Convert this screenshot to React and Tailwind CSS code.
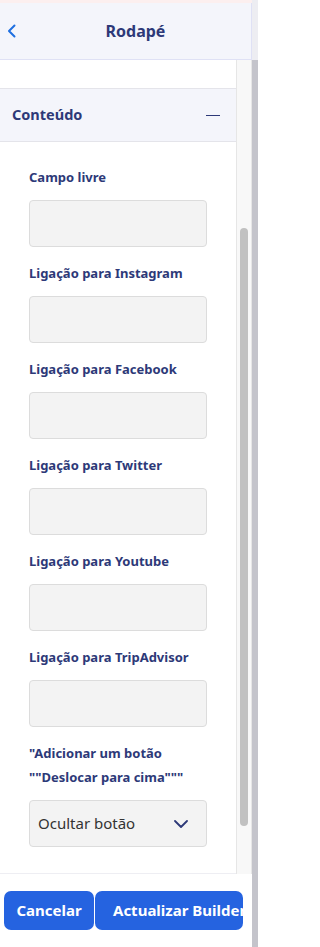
import React from "react";

const fields = [
  "Campo livre",
  "Ligação para Instagram",
  "Ligação para Facebook",
  "Ligação para Twitter",
  "Ligação para Youtube",
  "Ligação para TripAdvisor",
];

const App = () => {
  return (
    <div
      className="flex w-[258px] h-[947px] overflow-hidden bg-white"
      style={{ fontFamily: '"Noto Sans", "Open Sans", sans-serif' }}
    >
      <div className="flex flex-col w-[252px] h-full">
        <div className="h-[3px] bg-[#fcefef]" />
        {/* header */}
        <div className="flex items-center h-[57px] bg-[#f4f5fb] border-b border-r border-[#dfe1f5]">
          <button className="w-[22px] pl-[7px] flex items-center text-[#1e6fe0]">
            <svg width="9" height="14" viewBox="0 0 9 14" fill="none">
              <path d="M7.5 1.5L2 7l5.5 5.5" stroke="currentColor" strokeWidth="2" strokeLinecap="round" strokeLinejoin="round" />
            </svg>
          </button>
          <h1 className="flex-1 text-center text-[16px] font-bold text-[#2d3978] pr-[2px]">Rodapé</h1>
        </div>

        <div className="flex flex-1 min-h-0">
          {/* panel */}
          <div className="w-[236px] flex flex-col">
            <div className="h-[28px]" />
            <div className="flex items-center justify-between h-[54px] bg-[#f4f5fb] border-t border-b border-[#e4e4ea] pl-[12px] pr-[16px]">
              <span className="text-[14.5px] font-bold text-[#2d3978]">Conteúdo</span>
              <span className="block w-[14px] h-px bg-[#2d3978]" />
            </div>
            <div className="flex-1 pl-[29px] pr-[29px] pt-[23px] border-b border-[#eeeef3]">
              {fields.map((f, i) => (
                <div key={f} className={i === 0 ? "" : "mt-[14px]"}>
                  <div className="h-[24px] leading-[24px] text-[13px] font-bold text-[#2d3978] mb-[11px] whitespace-nowrap">{f}</div>
                  <div className="h-[47px] rounded-[4px] bg-[#f3f3f3] border border-[#dcdcdc]" />
                </div>
              ))}
              <div className="mt-[14px]">
                <div className="leading-[24px] text-[13px] font-bold text-[#2d3978] mb-[11px] whitespace-nowrap">
                  "Adicionar um botão
                  <br />
                  ""Deslocar para cima"""
                </div>
                <div className="flex items-center justify-between h-[47px] rounded-[4px] bg-[#f3f3f3] border border-[#dcdcdc] pl-[8px] pr-[18px]">
                  <span className="text-[15px] text-[#333]">Ocultar botão</span>
                  <svg width="14" height="8" viewBox="0 0 14 8" fill="none">
                    <path d="M1 1l6 6 6-6" stroke="#2d3978" strokeWidth="1.8" strokeLinecap="round" strokeLinejoin="round" />
                  </svg>
                </div>
              </div>
            </div>
          </div>
          {/* inner scrollbar */}
          <div className="w-[16px] bg-[#f8f8f8] border-l border-r border-[#e6e6e6] pt-[168px] pb-[48px] px-[3px]">
            <div className="h-full rounded-full bg-[#c1c1c1]" />
          </div>
        </div>

        {/* footer */}
        <div className="h-[73px] pt-[17px] pl-[4px] flex items-start">
          <button className="h-[39px] w-[90px] rounded-[7px] bg-[#2563e0] text-white text-[15px] font-bold">Cancelar</button>
          <button className="ml-[1px] h-[39px] w-[148px] rounded-[7px] bg-[#2563e0] text-white text-[15px] font-bold overflow-hidden whitespace-nowrap text-left pl-[18px]">
            Actualizar Builder
          </button>
        </div>
      </div>
      {/* outer scrollbar strip */}
      <div className="w-[6px] flex flex-col">
        <div className="h-[60px] bg-[#ededf2]" />
        <div className="flex-1 bg-[#c4c4cb]" />
      </div>
    </div>
  );
};

export default App;
